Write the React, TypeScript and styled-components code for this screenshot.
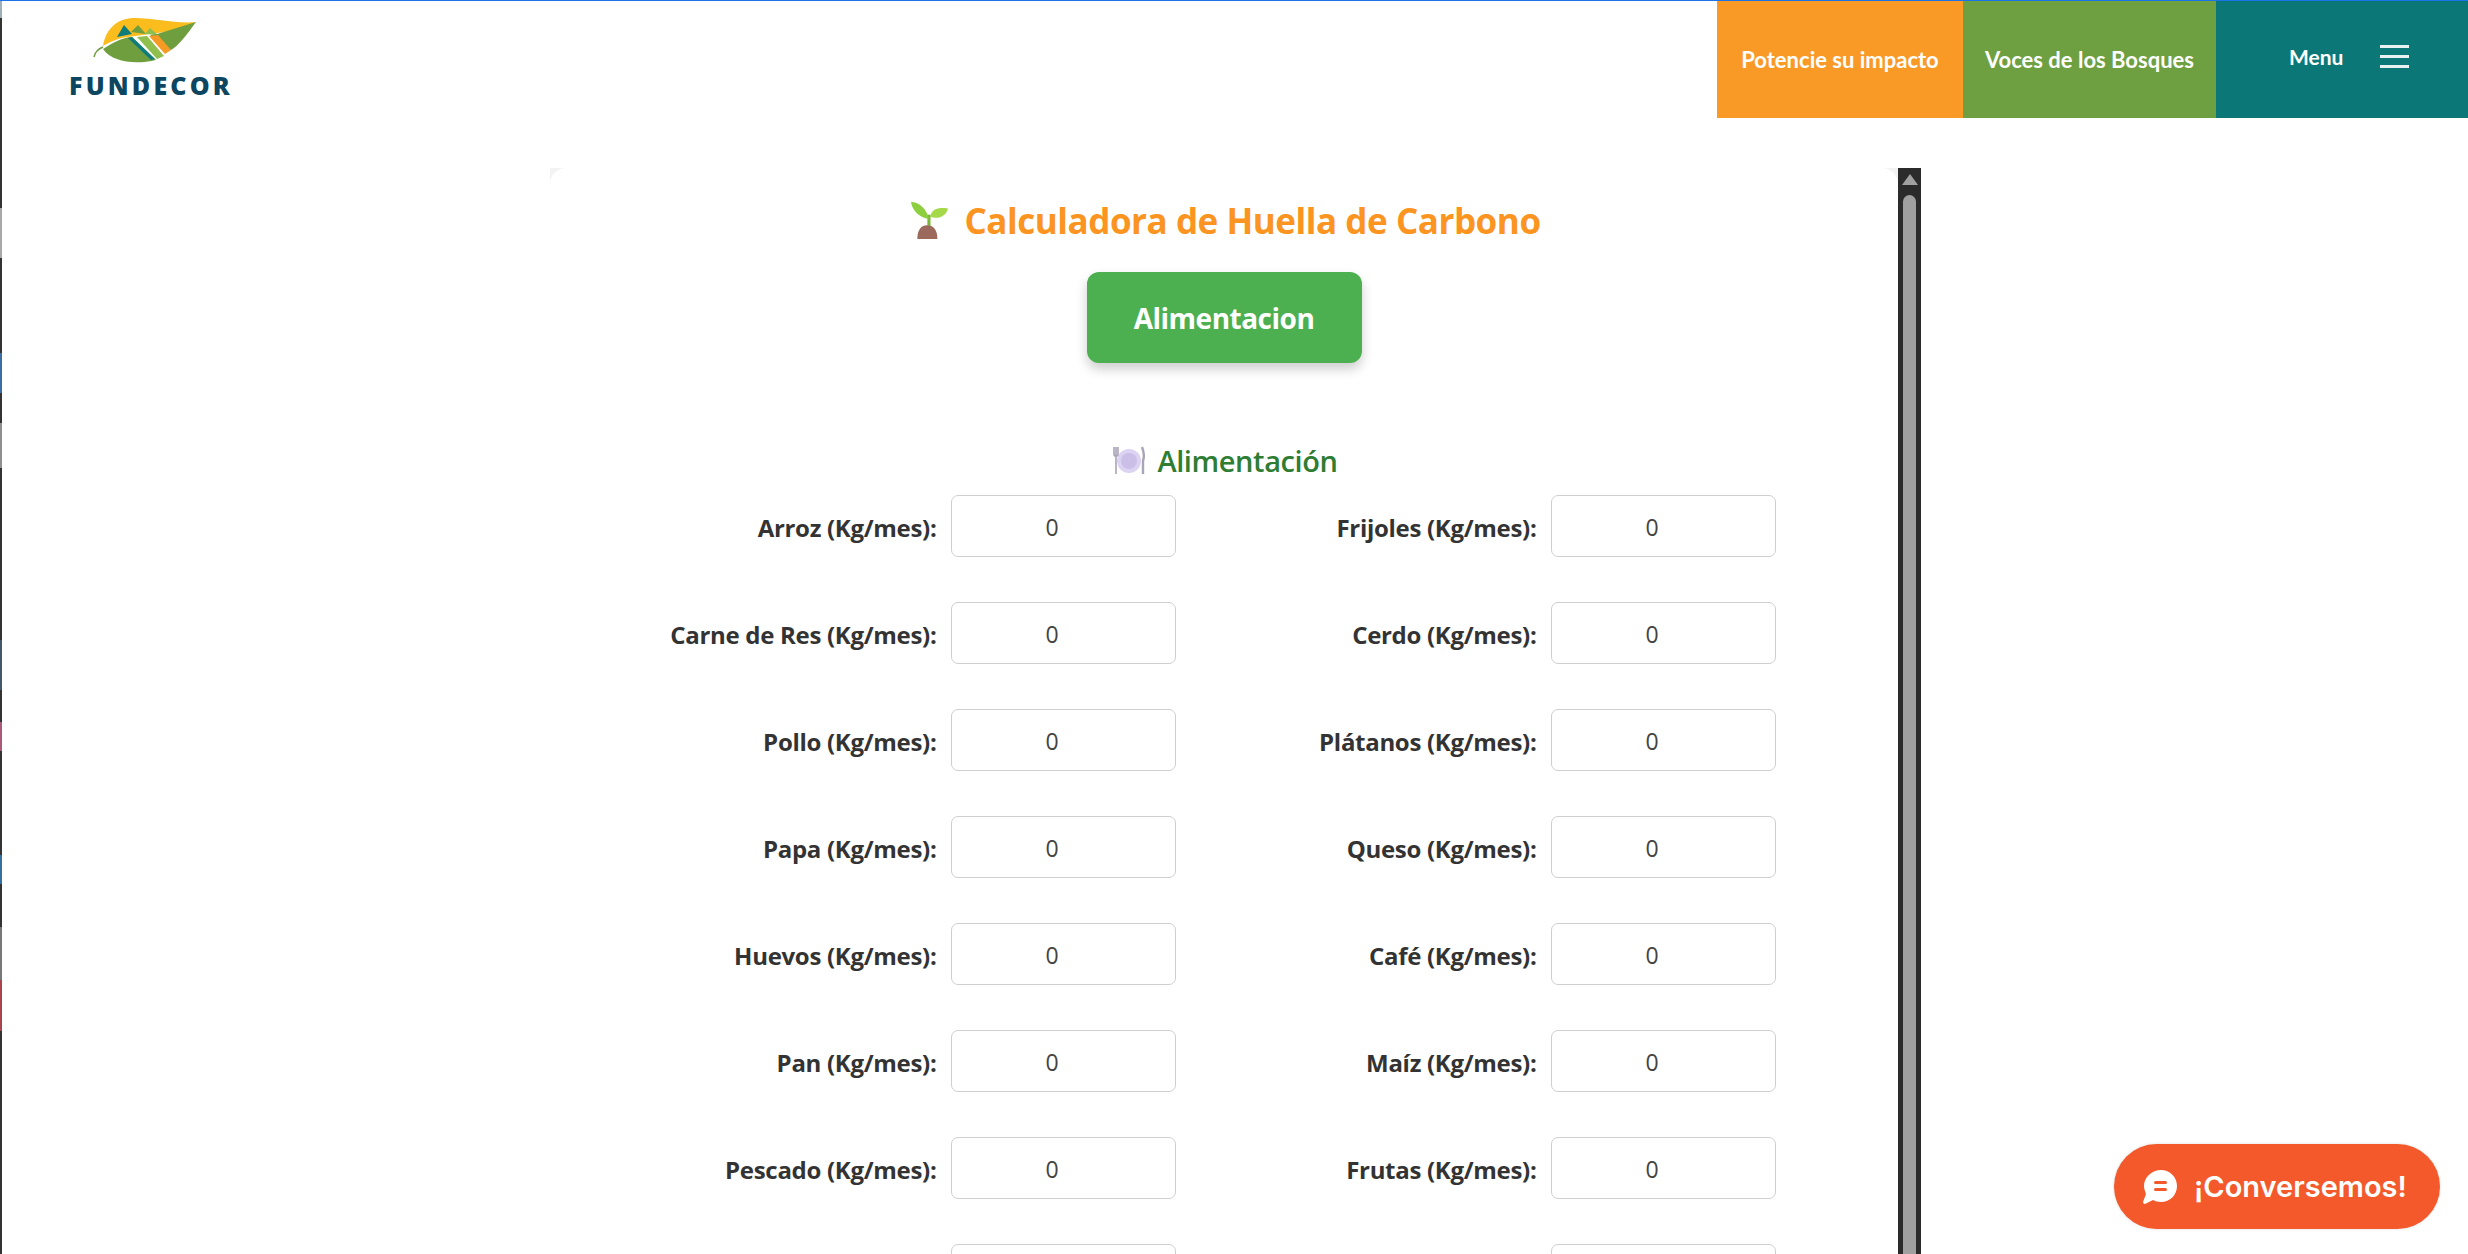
import React from "react";
import styled, { createGlobalStyle } from "styled-components";

const GlobalStyle = createGlobalStyle`
  html, body {
    margin: 0;
    padding: 0;
    height: 100%;
    background: #fff;
    overflow: hidden;
  }
  * { box-sizing: border-box; }
`;

const Page = styled.div`
  position: relative;
  height: 1254px;
  overflow: hidden;
  background: #fff;
  border-top: 1px solid #1a73e8;
`;

const LeftEdge = styled.div`
  position: absolute;
  left: 0;
  top: 0;
  width: 2px;
  height: 100%;
  background: linear-gradient(
    to bottom,
    #9fb0bb 0 17px,
    #333 17px 207px,
    #a8a8a8 207px 257px,
    #333 257px 352px,
    #3b6ea5 352px 392px,
    #333 392px 422px,
    #8f8f8f 422px 467px,
    #333 467px 639px,
    #44586b 639px 689px,
    #333 689px 721px,
    #a85a78 721px 750px,
    #333 750px 854px,
    #35709f 854px 883px,
    #333 883px 926px,
    #777 926px 979px,
    #a8434f 979px 1030px,
    #333 1030px
  );
`;

const Header = styled.header`
  display: flex;
  justify-content: space-between;
  height: 117px;
  background: #fff;
`;

const Logo = styled.div`
  display: flex;
  flex-direction: column;
  padding: 14px 0 0 69px;
`;

const LogoMark = styled.svg`
  display: block;
  margin-left: 21px;
`;

const LogoText = styled.div`
  font-family: "Open Sans", sans-serif;
  font-weight: 800;
  font-size: 25px;
  line-height: 25px;
  letter-spacing: 3.2px;
  margin-top: 8px;
  color: #0d4660;
`;

const Nav = styled.nav`
  display: flex;
  font-family: Lato, sans-serif;
  font-weight: 700;
  font-size: 22px;
  color: #fff;
`;

const NavLink = styled.div<{ $bg: string; $w: number }>`
  display: flex;
  align-items: center;
  justify-content: center;
  width: ${(p) => p.$w}px;
  background: ${(p) => p.$bg};
`;

const MenuBox = styled.div`
  display: flex;
  align-items: center;
  gap: 37px;
  width: 252px;
  padding: 0 0 6px 73px;
  background: #0b7777;
  font-size: 21px;
`;

const Burger = styled.div`
  display: flex;
  flex-direction: column;
  gap: 7px;
  width: 29px;
  span {
    display: block;
    height: 3px;
    background: #e8f2f2;
  }
`;

const Main = styled.main`
  display: flex;
  padding: 50px 0 0 550px;
`;

const Frame = styled.div`
  display: flex;
  width: 1371px;
`;

const Panel = styled.div`
  flex: 1;
  height: 1300px;
  background: #f3f3f3;
`;

const PanelInner = styled.div`
  height: 100%;
  padding-top: 26px;
  background: #fff;
  border-radius: 16px 16px 0 0;
  font-family: "Open Sans", sans-serif;
`;

const Title = styled.h1`
  display: flex;
  align-items: center;
  justify-content: center;
  gap: 15px;
  margin: 0;
  height: 52px;
  padding-left: 4px;
  font-size: 35px;
  font-weight: 700;
  letter-spacing: -0.45px;
  color: #fb9420;
`;

const TabRow = styled.div`
  display: flex;
  justify-content: center;
  margin-top: 26px;
`;

const TabButton = styled.button`
  width: 275px;
  height: 91px;
  border: 0;
  border-radius: 12px;
  background: #4caf50;
  color: #fff;
  font-family: inherit;
  font-size: 28px;
  font-weight: 700;
  letter-spacing: -0.5px;
  box-shadow: 0 6px 12px rgba(0, 0, 0, 0.2);
`;

const SectionTitle = styled.h2`
  display: flex;
  align-items: center;
  justify-content: center;
  gap: 12px;
  margin: 75px 0 0;
  height: 44px;
  padding-left: 3px;
  font-size: 29px;
  font-weight: 600;
  letter-spacing: -0.4px;
  color: #2e7d32;
`;

const FieldGrid = styled.div`
  display: grid;
  grid-template-columns: 520px 520px;
  justify-content: center;
  column-gap: 80px;
  row-gap: 45px;
  margin-top: 13px;
  padding-right: 17px;
`;

const Field = styled.label`
  display: flex;
  align-items: center;
  justify-content: flex-end;
  gap: 14px;
`;

const FieldName = styled.span`
  font-size: 24px;
  font-weight: 700;
  letter-spacing: -0.3px;
  white-space: nowrap;
  color: #333;
  padding-top: 3px;
`;

const FieldInput = styled.input`
  flex: none;
  width: 225px;
  height: 62px;
  padding: 2px 7px 0 0;
  border: 1.5px solid #cfcfcf;
  border-radius: 7px;
  background: #fff;
  font-family: inherit;
  font-size: 23px;
  color: #444;
  text-align: center;
  outline: none;
`;

const ScrollTrack = styled.div`
  display: flex;
  flex-direction: column;
  align-items: center;
  width: 23px;
  height: 1300px;
  background: #2b2b2b;
`;

const ScrollArrow = styled.div`
  width: 0;
  height: 0;
  margin-top: 6px;
  border-left: 8px solid transparent;
  border-right: 8px solid transparent;
  border-bottom: 11px solid #a0a0a0;
`;

const ScrollThumb = styled.div`
  width: 13px;
  flex: 1;
  margin-top: 10px;
  background: #a0a0a0;
  border-radius: 7px 7px 0 0;
`;

const ChatButton = styled.button`
  position: absolute;
  left: 2114px;
  top: 1143px;
  display: flex;
  align-items: center;
  gap: 16px;
  width: 326px;
  height: 85px;
  padding: 0 0 0 28px;
  border: 0;
  border-radius: 43px;
  background: #f4592b;
  color: #fff;
  font-family: Inter, sans-serif;
  font-size: 29px;
  font-weight: 600;
  box-shadow: 0 0 3px rgba(0, 0, 0, 0.15);
`;

const fields = [
  ["Arroz", "Frijoles"],
  ["Carne de Res", "Cerdo"],
  ["Pollo", "Plátanos"],
  ["Papa", "Queso"],
  ["Huevos", "Café"],
  ["Pan", "Maíz"],
  ["Pescado", "Frutas"],
  ["", ""],
].flat();

const LeafLogo = () => (
  <LogoMark width="110" height="50" viewBox="90 15 110 50">
    <path d="M103 46C106 28 118 18 135 18C155 18 176 24 196 22C180 30 165 32 150 34L128 37C118 38 110 42 103 46Z" fill="#fbbc1e" />
    <path d="M103 49C115 41 125 37 132 37L156 60C135 65 112 62 103 49Z" fill="#6f9e3f" />
    <path d="M94 57C95 52 98 49 103 47" fill="none" stroke="#6f9e3f" strokeWidth="1.5" />
    <path d="M117 37L124 25L132 34Z" fill="#0e7c7b" />
    <path d="M131 32L138 25L146 34Z" fill="#6f9e3f" />
    <path d="M145 34L150 28L158 35Z" fill="#8fbf4d" />
    <path d="M150 35L157 34L196 22C186 36 178 46 171 50Z" fill="#6f9e3f" />
    <path d="M128 38L132 37L155 59L151 60Z" fill="#0e7c7b" />
    <path d="M137 37L147 36L164 56L157 59Z" fill="#8fbf4d" />
    <path d="M149 36L158 35L171 50L165 54Z" fill="#f59a23" />
  </LogoMark>
);

const Seedling = () => (
  <svg width="38" height="38" viewBox="0 0 36 36">
    <path d="M17 24V13" stroke="#7cb63a" strokeWidth="3" fill="none" />
    <path d="M17 17C15 8 8 1 0 1C1 9 8 16 17 17Z" fill="#8ccf3f" />
    <path d="M18 15C20 7 26 6 35 7C34 13 27 18 18 15Z" fill="#a5d94a" />
    <path d="M6 36C6 27 10 23 15 23C21 23 25 27 25 36Z" fill="#9b6a5c" />
  </svg>
);

const PlateIcon = () => (
  <svg width="32" height="32" viewBox="0 0 32 32">
    <circle cx="16" cy="17" r="12" fill="#dcd2f2" />
    <circle cx="16" cy="17" r="8" fill="#cbbfe8" />
    <path d="M3 3V30M1 3V10C1 13 5 13 5 10V3" stroke="#aaa4b8" strokeWidth="1.6" fill="none" />
    <path d="M29 3C31 8 31 14 30 17V30" stroke="#aaa4b8" strokeWidth="2.4" fill="none" />
  </svg>
);

const ChatIcon = () => (
  <svg width="36" height="36" viewBox="0 0 36 36">
    <path d="M19 1C28 1 35 8 35 17C35 26 28 33 19 33C16 33 13 32 11 31L3 35C2 35 1 34 1 33L4 25C3 22 2 20 2 17C2 8 10 1 19 1Z" fill="#fff" />
    <rect x="12" y="12" width="13" height="3" rx="1.5" fill="#f4592b" />
    <rect x="12" y="19" width="13" height="3" rx="1.5" fill="#f4592b" />
  </svg>
);

const App = () => {
  return (
    <Page>
      <GlobalStyle />
      <LeftEdge />
      <Header>
        <Logo>
          <LeafLogo />
          <LogoText>FUNDECOR</LogoText>
        </Logo>
        <Nav>
          <NavLink $bg="#fa9a26" $w={246}>Potencie su impacto</NavLink>
          <NavLink $bg="#6e9f40" $w={253}>Voces de los Bosques</NavLink>
          <MenuBox>
            Menu
            <Burger>
              <span />
              <span />
              <span />
            </Burger>
          </MenuBox>
        </Nav>
      </Header>
      <Main>
        <Frame>
          <Panel>
            <PanelInner>
              <Title>
                <Seedling />
                Calculadora de Huella de Carbono
              </Title>
              <TabRow>
                <TabButton>Alimentacion</TabButton>
              </TabRow>
              <SectionTitle>
                <PlateIcon />
                Alimentación
              </SectionTitle>
              <FieldGrid>
                {fields.map((name, i) => (
                  <Field key={i}>
                    {name && <FieldName>{name} (Kg/mes):</FieldName>}
                    <FieldInput type="number" defaultValue={0} />
                  </Field>
                ))}
              </FieldGrid>
            </PanelInner>
          </Panel>
          <ScrollTrack>
            <ScrollArrow />
            <ScrollThumb />
          </ScrollTrack>
        </Frame>
      </Main>
      <ChatButton>
        <ChatIcon />
        ¡Conversemos!
      </ChatButton>
    </Page>
  );
};

export default App;
